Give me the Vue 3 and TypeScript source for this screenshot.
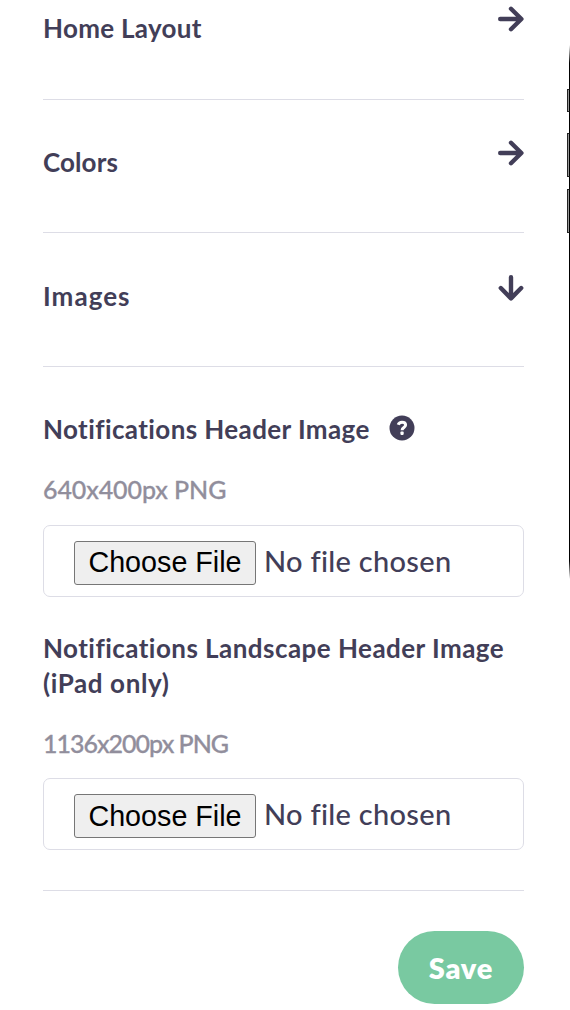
<script setup lang="ts">
interface Section {
  title: string
  key: string
  open: boolean
}

interface Upload {
  key: string
  lines: string[]
  size: string
  help: boolean
}

const sections: Section[] = [
  { title: 'Home Layout', key: 'home', open: false },
  { title: 'Colors', key: 'colors', open: false },
  { title: 'Images', key: 'images', open: true },
]

const uploads: Upload[] = [
  { key: 'portrait', lines: ['Notifications Header Image'], size: '640x400px PNG', help: true },
  {
    key: 'landscape',
    lines: ['Notifications Landscape Header Image', '(iPad only)'],
    size: '1136x200px PNG',
    help: false,
  },
]
</script>

<template>
  <main class="page">
    <div class="panel">
      <section v-for="s in sections" :key="s.key" class="row" :class="s.key">
        <h2 class="title">{{ s.title }}</h2>
        <svg class="arrow" :class="{ down: s.open }" viewBox="0 0 26 26">
          <path d="M2.2 13H23M13 2.8L23.4 13L13 23.2" />
        </svg>
      </section>

      <div v-for="u in uploads" :key="u.key" class="upload" :class="u.key">
        <div class="label">
          <div class="lines">
            <div v-for="(l, i) in u.lines" :key="l" class="title" :class="'line' + i">{{ l }}</div>
          </div>
          <svg v-if="u.help" class="help" viewBox="0 0 26 26">
            <circle cx="13" cy="13" r="12.5" />
            <path d="M9.2 9.8C9.8 8.1 11 7.2 13 7.2C15.2 7.2 16.6 8.3 16.6 10.1C16.6 12.5 13.1 12.5 13.1 15.2" />
            <rect x="11.4" y="16.6" width="3.3" height="3.3" rx=".8" />
          </svg>
        </div>
        <div class="size">{{ u.size }}</div>
        <div class="field">
          <button class="choose" type="button">Choose File</button>
          <span class="none">No file chosen</span>
        </div>
      </div>

      <footer class="footer">
        <button class="save" type="button">Save</button>
      </footer>
    </div>

    <div class="device">
      <i class="edge"></i>
      <i class="key mute"></i>
      <i class="key up"></i>
      <i class="key low"></i>
    </div>
  </main>
</template>

<style>
html,
body {
  margin: 0;
  background: #fff;
  overflow: hidden;
}
</style>

<style scoped>
.page {
  position: relative;
  width: 570px;
  height: 1010px;
  overflow: hidden;
  background: #fff;
  color: #423e58;
  font-family: Lato, "Open Sans", sans-serif;
  font-variant-ligatures: none;
}
.panel {
  width: 481px;
  margin-left: 43px;
}
.row {
  box-sizing: border-box;
  display: flex;
  justify-content: space-between;
  align-items: flex-start;
  height: 134px;
  padding-top: 41px;
  border-bottom: 1px solid #dddde6;
}
.row.home {
  height: 100px;
  padding-top: 6px;
}
.row.colors {
  height: 133px;
  padding-top: 40px;
}
.title {
  font-size: 26px;
  line-height: 34px;
  font-weight: 700;
  letter-spacing: 0.4px;
  white-space: nowrap;
}
.row .title {
  margin: 5px 0 0;
}
.home .title {
  letter-spacing: 0.3px;
}
.colors .title {
  letter-spacing: 0.1px;
}
.images .title {
  letter-spacing: 1.05px;
}
.arrow {
  width: 26px;
  height: 26px;
  fill: none;
  stroke: #423e58;
  stroke-width: 4.4;
  stroke-linecap: round;
  stroke-linejoin: round;
}
.arrow.down {
  margin-top: 0.5px;
  transform: rotate(90deg);
}
.label {
  display: flex;
  align-items: flex-start;
}
.lines {
  padding-top: 1px;
}
.portrait .lines {
  width: 346px;
}
.label .title {
  line-height: 35px;
}
.landscape .line0 {
  letter-spacing: 0.46px;
}
.label .line1 {
  letter-spacing: 0.6px;
}
.upload.portrait {
  padding-top: 44px;
}
.upload.landscape {
  padding-top: 33px;
}
.help {
  width: 26px;
  height: 26px;
  margin-top: 4px;
  fill: #423e58;
}
.help path {
  fill: none;
  stroke: #fff;
  stroke-width: 3;
}
.help rect {
  fill: #fff;
}
.size {
  margin-top: 25px;
  font-size: 25px;
  line-height: 35px;
  font-weight: 500;
  letter-spacing: -0.1px;
  color: #918e9c;
  -webkit-text-stroke: 0.3px #918e9c;
  white-space: nowrap;
}
.landscape .size {
  letter-spacing: -1px;
}
.field {
  box-sizing: border-box;
  display: flex;
  align-items: center;
  height: 72px;
  margin-top: 18px;
  padding-left: 30px;
  padding-top: 3px;
  border: 1px solid #dddde6;
  border-radius: 7px;
}
.choose {
  box-sizing: border-box;
  width: 182px;
  height: 44px;
  padding: 0 0 2px;
  border: 1px solid #767676;
  border-radius: 3px;
  background: #efefef;
  color: #000;
  font: 28.7px/40px "Liberation Sans", Arial, sans-serif;
  white-space: nowrap;
}
.landscape .choose {
  padding-bottom: 0;
}
.none {
  margin: 0 0 4px 8px;
  font-size: 29px;
  line-height: 40px;
  font-weight: 500;
  letter-spacing: 0.3px;
  white-space: nowrap;
}
.landscape .field {
  margin-top: 17px;
}
.footer {
  display: flex;
  justify-content: flex-end;
  margin-top: 40px;
  padding-top: 40px;
  border-top: 1px solid #dddde6;
}
.save {
  width: 126px;
  height: 73px;
  padding: 0;
  border: 0;
  border-radius: 37px;
  background: #79c9a1;
  color: #fff;
  font: 800 29px/73px Lato, sans-serif;
  letter-spacing: 0.8px;
}
.device {
  position: absolute;
  top: 0;
  right: 0;
  width: 3px;
  height: 600px;
}
.edge {
  position: absolute;
  right: 0;
  top: 45px;
  width: 1px;
  height: 534px;
  background: linear-gradient(transparent, #000 18px, #000 516px, transparent);
}
.key {
  position: absolute;
  box-sizing: border-box;
  right: 0;
  width: 3px;
  border: 1px solid #222;
  border-right-color: #000;
  background: #999;
}
.mute {
  top: 89px;
  height: 23px;
}
.up {
  top: 133px;
  height: 44px;
}
.low {
  top: 189px;
  height: 44px;
}
</style>
